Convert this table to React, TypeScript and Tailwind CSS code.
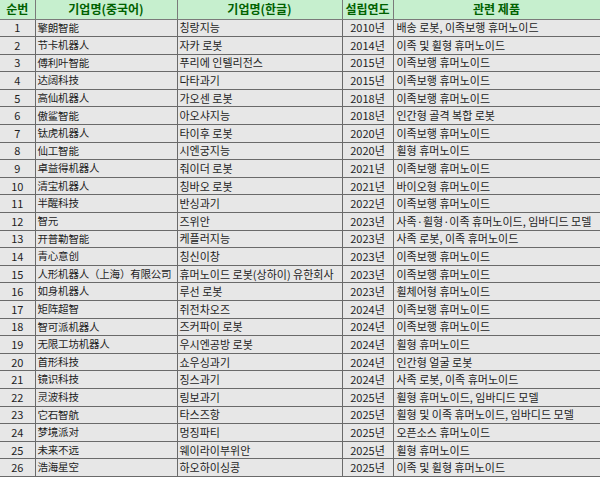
import React from "react";

const rows: [string, string, string, string][] = [
  ["擎朗智能", "칭랑지능", "2010년", "배송 로봇, 이족보행 휴머노이드"],
  ["节卡机器人", "자카 로봇", "2014년", "이족 및 휠형 휴머노이드"],
  ["傅利叶智能", "푸리에 인텔리전스", "2015년", "이족보행 휴머노이드"],
  ["达阔科技", "다타과기", "2015년", "이족보행 휴머노이드"],
  ["高仙机器人", "가오센 로봇", "2018년", "이족보행 휴머노이드"],
  ["傲鲨智能", "아오샤지능", "2018년", "인간형 골격 복합 로봇"],
  ["钛虎机器人", "타이후 로봇", "2020년", "이족보행 휴머노이드"],
  ["仙工智能", "시엔궁지능", "2020년", "휠형 휴머노이드"],
  ["卓益得机器人", "줘이더 로봇", "2021년", "이족보행 휴머노이드"],
  ["清宝机器人", "칭바오 로봇", "2021년", "바이오형 휴머노이드"],
  ["半醒科技", "반싱과기", "2022년", "이족보행 휴머노이드"],
  ["智元", "즈위안", "2023년", "사족·휠형·이족 휴머노이드, 임바디드 모델"],
  ["开普勒智能", "케플러지능", "2023년", "사족 로봇, 이족 휴머노이드"],
  ["青心意创", "칭신이창", "2023년", "이족보행 휴머노이드"],
  ["人形机器人（上海）有限公司", "휴머노이드 로봇(상하이) 유한회사", "2023년", "이족보행 휴머노이드"],
  ["如身机器人", "루선 로봇", "2023년", "휠체어형 휴머노이드"],
  ["矩阵超智", "쥐전차오즈", "2024년", "이족보행 휴머노이드"],
  ["智可派机器人", "즈커파이 로봇", "2024년", "이족보행 휴머노이드"],
  ["无限工坊机器人", "우시엔공방 로봇", "2024년", "휠형 휴머노이드"],
  ["首形科技", "쇼우싱과기", "2024년", "인간형 얼굴 로봇"],
  ["镜识科技", "징스과기", "2024년", "사족 로봇, 이족 휴머노이드"],
  ["灵波科技", "링보과기", "2025년", "휠형 휴머노이드, 임바디드 모델"],
  ["它石智航", "타스즈항", "2025년", "휠형 및 이족 휴머노이드, 임바디드 모델"],
  ["梦境派对", "멍징파티", "2025년", "오픈소스 휴머노이드"],
  ["未来不远", "웨이라이부위안", "2025년", "휠형 휴머노이드"],
  ["浩海星空", "하오하이싱콩", "2025년", "이족 및 휠형 휴머노이드"],
];

const font = {
  fontFamily: '"Noto Sans CJK KR", "Noto Sans CJK SC", "Noto Sans", sans-serif',
};
const zhFont = {
  fontFamily: '"Noto Sans CJK SC", "Noto Sans CJK KR", sans-serif',
};

export default function App() {
  return (
    <div className="w-[600px] h-[477px] overflow-hidden bg-[#e7e7e7]" style={font}>
      <table className="table-fixed border-collapse w-[600px] text-[11px] leading-none text-[#1e1e1e]">
        <colgroup>
          <col className="w-[35px]" />
          <col className="w-[142px]" />
          <col className="w-[165px]" />
          <col className="w-[51px]" />
          <col className="w-[207px]" />
        </colgroup>
        <thead>
          <tr className="h-[19px] bg-[#c6efce] text-[#006100] text-[12px] font-bold">
            <th className="border border-[#7a7a7a] border-t-0 border-l-0 p-0 text-center">순번</th>
            <th className="border border-[#7a7a7a] border-t-0 p-0 text-center">기업명(중국어)</th>
            <th className="border border-[#7a7a7a] border-t-0 p-0 text-center">기업명(한글)</th>
            <th className="border border-[#7a7a7a] border-t-0 p-0 text-center">설립연도</th>
            <th className="border border-[#7a7a7a] border-t-0 border-r-[#555] p-0 text-center">관련 제품</th>
          </tr>
        </thead>
        <tbody>
          {rows.map((r, i) => (
            <tr key={i} className="h-[17.6px] bg-[#e7e7e7]">
              <td className="border border-[#6a6a6a] border-l-0 p-0 text-center whitespace-nowrap">{i + 1}</td>
              <td
                className="border border-[#6a6a6a] p-0 pl-[2px] text-left text-[10.5px] tracking-[-0.2px] whitespace-nowrap overflow-hidden"
                style={zhFont}
              >
                {r[0]}
              </td>
              <td className="border border-[#6a6a6a] p-0 pl-[2px] text-left whitespace-nowrap overflow-visible">{r[1]}</td>
              <td className="border border-[#6a6a6a] p-0 text-center whitespace-nowrap">{r[2]}</td>
              <td className="border border-[#6a6a6a] border-r-[#555] p-0 pl-[3px] text-left whitespace-nowrap overflow-hidden">{r[3]}</td>
            </tr>
          ))}
        </tbody>
      </table>
    </div>
  );
}
